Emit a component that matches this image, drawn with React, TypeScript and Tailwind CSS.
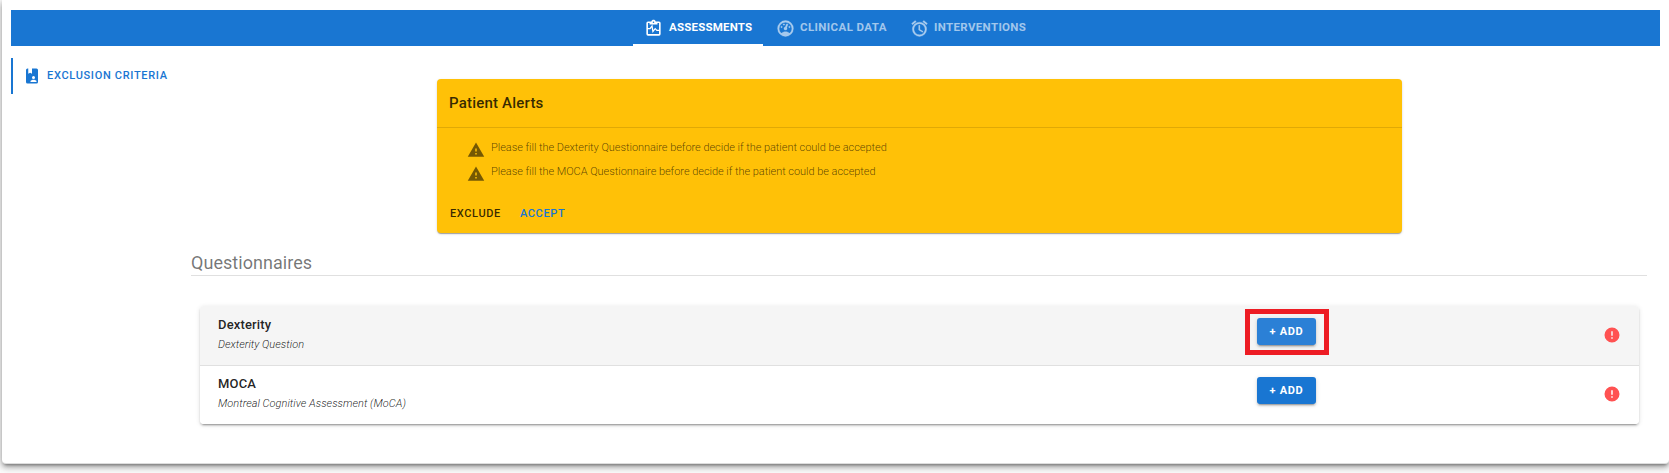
import React from "react";

const alarm =
  "M12,20A7,7 0 0,1 5,13A7,7 0 0,1 12,6A7,7 0 0,1 19,13A7,7 0 0,1 12,20M12,4A9,9 0 0,0 3,13A9,9 0 0,0 12,22A9,9 0 0,0 21,13A9,9 0 0,0 12,4M12.5,8H11V14L15.75,16.85L16.5,15.62L12.5,13.25V8M7.88,3.39L6.6,1.86L2,5.71L3.29,7.24L7.88,3.39M22,5.72L17.4,1.86L16.11,3.39L20.71,7.25L22,5.72Z";
const alert = "M13,14H11V10H13M13,18H11V16H13M1,21H23L12,2L1,21Z";
const alertCircle =
  "M13,13H11V7H13M13,17H11V15H13M12,2A10,10 0 0,0 2,12A10,10 0 0,0 12,22A10,10 0 0,0 22,12A10,10 0 0,0 12,2Z";
const gauge =
  "M17.3,18C19,16.5 20,14.4 20,12A8,8 0 0,0 12,4A8,8 0 0,0 4,12C4,14.4 5,16.5 6.7,18C8.2,16.7 10,16 12,16C14,16 15.9,16.7 17.3,18M12,2A10,10 0 0,1 22,12A10,10 0 0,1 12,22A10,10 0 0,1 2,12A10,10 0 0,1 12,2M7,9A1,1 0 0,1 8,10A1,1 0 0,1 7,11A1,1 0 0,1 6,10A1,1 0 0,1 7,9M10,6A1,1 0 0,1 11,7A1,1 0 0,1 10,8A1,1 0 0,1 9,7A1,1 0 0,1 10,6M17,9A1,1 0 0,1 18,10A1,1 0 0,1 17,11A1,1 0 0,1 16,10A1,1 0 0,1 17,9M14.4,6.1C14.9,6.3 15.1,6.9 15,7.4L13.6,10.8C13.8,11.1 14,11.5 14,12A2,2 0 0,1 12,14A2,2 0 0,1 10,12C10,11 10.7,10.1 11.7,10L13.1,6.7C13.3,6.1 13.9,5.9 14.4,6.1Z";
const clipboardPulse =
  "M19,3H14.82C14.4,1.84 13.3,1 12,1C10.7,1 9.6,1.84 9.18,3H5A2,2 0 0,0 3,5V19A2,2 0 0,0 5,21H19A2,2 0 0,0 21,19V5A2,2 0 0,0 19,3M12,3A1,1 0 0,1 13,4A1,1 0 0,1 12,5A1,1 0 0,1 11,4A1,1 0 0,1 12,3M5,19V13H8.1L9.6,10.6L10.8,17.6L14.2,13.3L15.9,15H19V19H5M19,13.5H16.5L14.1,11.1L11.8,14L10.6,7L7.2,11.5H5V5H7V7H17V5H19V13.5Z";
const bookAccount =
  "M6,2A2,2 0 0,0 4,4V20A2,2 0 0,0 6,22H18A2,2 0 0,0 20,20V4A2,2 0 0,0 18,2H12V9L9.5,7.5L7,9V2H6M14,12A2,2 0 0,1 16,14A2,2 0 0,1 14,16A2,2 0 0,1 12,14A2,2 0 0,1 14,12M10,19C10,17.67 12.67,17 14,17C15.33,17 18,17.67 18,19V20H10V19Z";

function Icon({ d, className }: { d: string; className: string }) {
  return (
    <svg viewBox="0 0 24 24" fill="currentColor" className={`shrink-0 ${className}`}>
      <path fillRule="evenodd" d={d} />
    </svg>
  );
}

const tabs = [
  { label: "ASSESSMENTS", icon: clipboardPulse, box: "w-[130px] border-white pl-[11px] text-white", iconBox: "mr-[6px] mt-px", text: "tracking-[0.2px]" },
  { label: "CLINICAL DATA", icon: gauge, box: "w-[134px] border-transparent pl-[13px] text-white/60", iconBox: "mr-[5px] mt-px stroke-current stroke-[0.4]", text: "tracking-[0.4px]" },
  { label: "INTERVENTIONS", icon: alarm, box: "w-[140px] border-transparent pl-[13px] text-white/60", iconBox: "mr-[5px] mt-px stroke-current stroke-[0.4]", text: "tracking-[0.35px]" },
];

const alerts = [
  "Please fill the Dexterity Questionnaire before decide if the patient could be accepted",
  "Please fill the MOCA Questionnaire before decide if the patient could be accepted",
];

const rows = [
  { name: "Dexterity", detail: "Dexterity Question", active: true },
  { name: "MOCA", detail: "Montreal Cognitive Assessment (MoCA)", active: false },
];

const raised =
  "shadow-[0_3px_1px_-2px_rgba(0,0,0,0.2),0_2px_2px_0_rgba(0,0,0,0.14),0_1px_5px_0_rgba(0,0,0,0.12)]";
const flat =
  "shadow-[0_2px_1px_-1px_rgba(0,0,0,0.2),0_1px_1px_0_rgba(0,0,0,0.14),0_1px_3px_0_rgba(0,0,0,0.12)]";

export default function App() {
  return (
    <div className="h-[473px] w-[1669px] overflow-hidden bg-[#fafafa] pl-[2px] font-[Roboto,sans-serif] text-black/87">
      <div className="h-[464px] w-[1667px] rounded-b-[4px] border-b border-[#dddddd] bg-white pl-[9px] pr-[9px] pt-[10px] shadow-[0_3px_3px_-2px_rgba(0,0,0,0.3),0_3px_6px_0_rgba(0,0,0,0.3),0_1px_8px_0_rgba(0,0,0,0.15)]">
        <nav className="flex h-9 justify-center bg-[#1976d2] pr-px">
          {tabs.map((tab) => (
            <button key={tab.label} className={`flex h-9 items-center border-b-2 pt-px ${tab.box}`}>
              <Icon d={tab.icon} className={`h-[19px] w-[19px] ${tab.iconBox}`} />
              <span className={`whitespace-nowrap text-[11.5px] font-bold ${tab.text}`}>{tab.label}</span>
            </button>
          ))}
        </nav>
        <div className="flex">
          <aside className="mt-3 flex h-9 w-[180px] items-center border-l-2 border-[#1976d2] pl-[10px] text-[#1976d2]">
            <Icon d={bookAccount} className="mr-[6px] h-[18px] w-[18px]" />
            <span className="whitespace-nowrap text-[11px] font-medium tracking-[0.68px]">EXCLUSION CRITERIA</span>
          </aside>
          <main className="w-[1456px] pt-[33px]">
            <section className={`ml-[246px] h-[154px] w-[965px] rounded-[4px] bg-[#ffc107] ${flat}`}>
              <h2 className="flex h-[49px] items-center border-b border-black/12 pl-3 text-[15px] font-medium tracking-[0.2px] text-black/80">
                Patient Alerts
              </h2>
              <div className="flex flex-col pl-[30px] pt-[8px] text-black/65">
                {alerts.map((message) => (
                  <div key={message} className="flex h-6 items-center">
                    <Icon d={alert} className="mr-[6px] mt-[3px] h-[18px] w-[18px] text-black/54" />
                    <p className="text-[11px] font-light tracking-[-0.045px]">{message}</p>
                  </div>
                ))}
              </div>
              <div className="flex pl-[13px] pt-[20px] text-[11px] font-medium leading-[20px] tracking-[0.63px] text-black/80">
                <button className="mr-[19px]">EXCLUDE</button>
                <button className="text-[#1976d2]">ACCEPT</button>
              </div>
            </section>
            <h1 className="mt-[16px] h-[27px] border-b border-black/12 text-[18px] font-normal leading-[28px] tracking-[0.05px] text-black/55">
              Questionnaires
            </h1>
            <section className={`ml-[9px] mt-[30px] h-[118px] w-[1439px] overflow-hidden rounded-[4px] bg-white ${raised}`}>
              {rows.map((row) => (
                <div
                  key={row.name}
                  className={`flex h-[59px] ${row.active ? "bg-[#f5f5f5]" : "border-t border-black/12 bg-white"}`}
                >
                  <div className={`w-[1026px] pl-[18px] ${row.active ? "pt-[9px]" : "pt-[8px]"}`}>
                    <h3 className="text-[13px] font-medium leading-[20px] tracking-[0.15px]">{row.name}</h3>
                    <p className="mt-px text-[11px] font-light italic leading-[18px] tracking-[0.03px]">{row.detail}</p>
                  </div>
                  <div className="w-[377px] pl-[19px]">
                    <div
                      className={
                        row.active
                          ? "mt-[3px] h-[46px] w-[84px] border-[5px] border-[#ed1c24] pl-[7px] pt-[4px]"
                          : "pl-3 pt-[11px]"
                      }
                    >
                      <button
                        className={`flex h-[27px] w-[59px] items-center justify-center rounded-[3px] pt-px text-[11px] font-bold tracking-[0.7px] text-white ${raised} ${row.active ? "bg-[#2b80d6]" : "bg-[#1976d2]"}`}
                      >
                        + ADD
                      </button>
                    </div>
                  </div>
                  <Icon
                    d={alertCircle}
                    className={`h-[18px] w-[18px] text-[#ff5252] ${row.active ? "mt-[20px]" : "mt-[19px]"}`}
                  />
                </div>
              ))}
            </section>
          </main>
        </div>
      </div>
    </div>
  );
}
